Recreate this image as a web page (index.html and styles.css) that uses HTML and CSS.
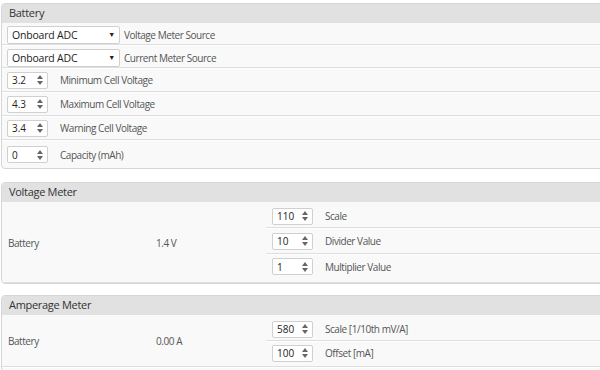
FILE: index.html
```html
<!DOCTYPE html>
<html>
<head>
<meta charset="utf-8">
<link rel="stylesheet" href="styles.css">
</head>
<body>
<div class="panel p1">
  <div class="head">Battery</div>
  <div class="row sel-row">
    <div class="select"><span>Onboard ADC</span><span class="caret">▼</span></div>
    <span class="lbl-s">Voltage Meter Source</span>
  </div>
  <div class="row sel-row">
    <div class="select"><span>Onboard ADC</span><span class="caret">▼</span></div>
    <span class="lbl-s">Current Meter Source</span>
  </div>
  <div class="row">
    <div class="spin"><span class="val">3.2</span><span class="arrows"><i class="up"></i><i class="dn"></i></span></div>
    <span class="lbl">Minimum Cell Voltage</span>
  </div>
  <div class="row">
    <div class="spin"><span class="val">4.3</span><span class="arrows"><i class="up"></i><i class="dn"></i></span></div>
    <span class="lbl">Maximum Cell Voltage</span>
  </div>
  <div class="row">
    <div class="spin"><span class="val">3.4</span><span class="arrows"><i class="up"></i><i class="dn"></i></span></div>
    <span class="lbl">Warning Cell Voltage</span>
  </div>
  <div class="row last">
    <div class="spin"><span class="val">0</span><span class="arrows"><i class="up"></i><i class="dn"></i></span></div>
    <span class="lbl">Capacity (mAh)</span>
  </div>
</div>

<div class="panel p2">
  <div class="head">Voltage Meter</div>
  <div class="meter">
    <div class="name">Battery</div>
    <div class="reading">1.4 V</div>
    <div class="fields">
      <div class="frow">
        <div class="spin"><span class="val">110</span><span class="arrows"><i class="up"></i><i class="dn"></i></span></div>
        <span class="lbl">Scale</span>
      </div>
      <div class="frow">
        <div class="spin"><span class="val">10</span><span class="arrows"><i class="up"></i><i class="dn"></i></span></div>
        <span class="lbl">Divider Value</span>
      </div>
      <div class="frow">
        <div class="spin"><span class="val">1</span><span class="arrows"><i class="up"></i><i class="dn"></i></span></div>
        <span class="lbl">Multiplier Value</span>
      </div>
    </div>
  </div>
</div>

<div class="panel p3">
  <div class="head">Amperage Meter</div>
  <div class="meter">
    <div class="name">Battery</div>
    <div class="reading">0.00 A</div>
    <div class="fields">
      <div class="frow">
        <div class="spin"><span class="val">580</span><span class="arrows"><i class="up"></i><i class="dn"></i></span></div>
        <span class="lbl">Scale [1/10th mV/A]</span>
      </div>
      <div class="frow">
        <div class="spin"><span class="val">100</span><span class="arrows"><i class="up"></i><i class="dn"></i></span></div>
        <span class="lbl">Offset [mA]</span>
      </div>
    </div>
  </div>
</div>
</body>
</html>
```

FILE: styles.css
```css
* { box-sizing: border-box; }
html, body { margin: 0; padding: 0; background: #fff; }
body {
  font-family: "Open Sans", "Noto Sans", sans-serif;
  font-size: 10px;
  letter-spacing: -0.45px;
  color: #555;
  width: 600px;
  height: 370px;
  overflow: hidden;
  padding-top: 3px;
}
.panel {
  margin-left: 1px;
  width: 620px;
  border: 1px solid #d6d6d6;
  border-radius: 4px;
  background: #f9f9f9;
  overflow: hidden;
}
.p2 { margin-top: 13px; }
.p3 { margin-top: 11px; }
.head {
  height: 19px;
  background: #e1e1e1;
  font-size: 11px;
  letter-spacing: -0.3px;
  line-height: 18px;
  padding-left: 7px;
  color: #333;
}
.row {
  display: flex;
  align-items: center;
  height: 23px;
  padding-left: 5px;
  border-bottom: 1px solid #dedede;
  box-shadow: 0 1px 0 #fff;
  margin-bottom: 1px;
}
.row.sel-row { height: 22px; padding-top: 2px; }
.row.last { border-bottom: none; box-shadow: none; height: 27px; margin-bottom: 0; }
.select {
  width: 113px;
  height: 18px;
  background: #fff;
  border: 1px solid #d0d0d0;
  border-radius: 2px;
  display: flex;
  align-items: center;
  justify-content: space-between;
  padding: 0 4px 0 4px;
  font-family: "Open Sans", sans-serif;
  font-size: 10.5px;
  letter-spacing: -0.2px;
  color: #222;
}
.caret { font-size: 7px; color: #222; }
.lbl-s { margin-left: 4px; }
.spin {
  width: 41px;
  height: 17px;
  background: #fff;
  border: 1px solid #d0d0d0;
  border-radius: 2px;
  display: flex;
  align-items: center;
  justify-content: space-between;
  padding-left: 4px;
  font-family: "Open Sans", sans-serif;
  font-size: 10px;
  letter-spacing: 0;
  color: #222;
}
.arrows {
  width: 9px;
  height: 13px;
  margin-right: 3px;
  display: flex;
  flex-direction: column;
  align-items: center;
  justify-content: center;
  gap: 2px;
}
.arrows i {
  display: block;
  width: 0;
  height: 0;
  border-left: 3px solid transparent;
  border-right: 3px solid transparent;
}
.arrows .up { border-bottom: 4px solid #666; }
.arrows .dn { border-top: 4px solid #666; }
.lbl { margin-left: 12px; }
.meter {
  display: flex;
  align-items: center;
  padding: 1px 0 0 6px;
  border-bottom: 1px solid #dedede;
  box-shadow: 0 1px 0 #fff;
}
.p3 .meter { margin-bottom: 4px; }
.name { width: 148px; }
.reading { width: 110px; }
.fields { flex: 1; }
.frow {
  display: flex;
  align-items: center;
  height: 25px;
  padding-left: 6px;
  border-bottom: 1px solid #dedede;
  box-shadow: 0 1px 0 #fff;
  margin-bottom: 1px;
}
.frow:first-child { padding-top: 2px; }
.frow:last-child { border-bottom: none; box-shadow: none; margin-bottom: 0; height: 27px; padding-bottom: 4px; }
.p3 .frow:last-child { height: 24px; padding-bottom: 2px; }
```
